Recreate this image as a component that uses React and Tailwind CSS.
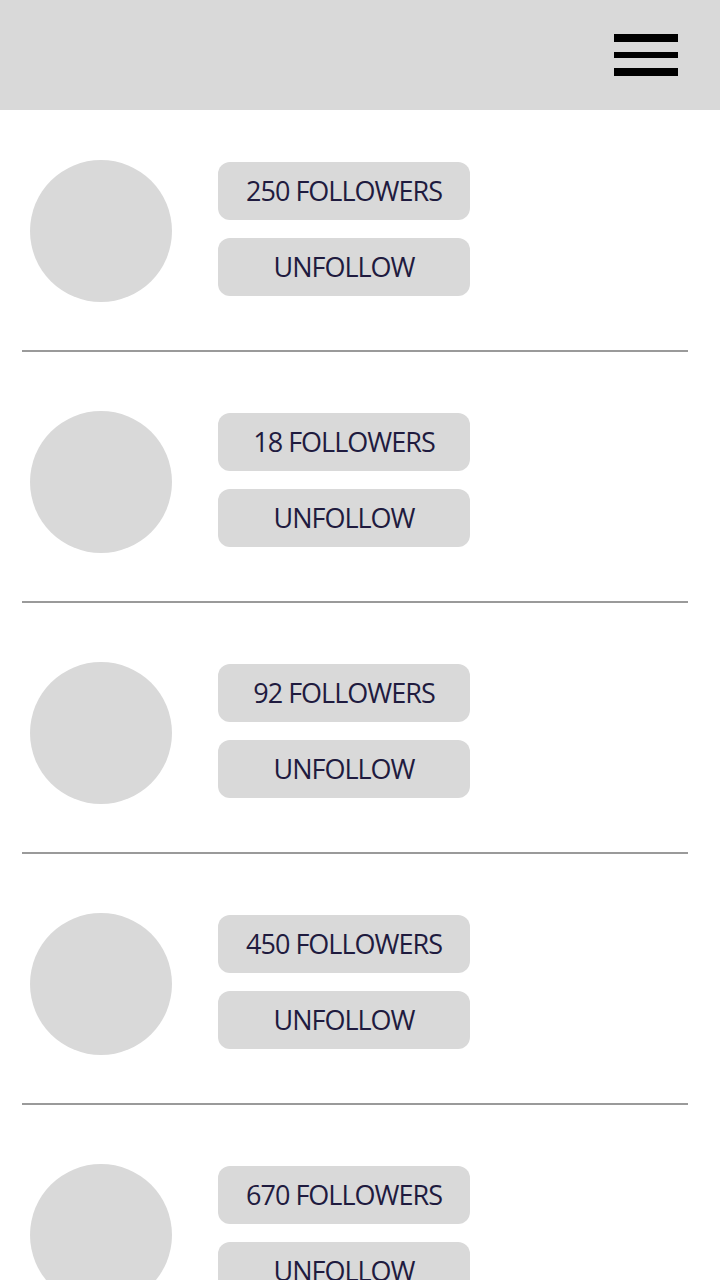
const PEOPLE = [
  { id: 1, followers: 250 },
  { id: 2, followers: 18 },
  { id: 3, followers: 92 },
  { id: 4, followers: 450 },
  { id: 5, followers: 670 },
];

function Pill({ children }) {
  return (
    <button className="flex h-[58px] w-[252px] items-center justify-center rounded-[12px] bg-[#d9d9d9] text-[27px] tracking-[-1px] text-[#1f1b3f]">
      {children}
    </button>
  );
}

export default function App() {
  return (
    <div className="min-h-screen bg-white font-['Open_Sans',sans-serif]">
      <header className="flex h-[110px] items-start justify-end bg-[#d9d9d9] pr-[42px] pt-[34px]">
        {/* hamburger */}
        <div className="flex w-[64px] flex-col">
          <span className="h-[8px] bg-black" />
          <span className="mt-[10px] h-[6px] bg-black" />
          <span className="mt-[10px] h-[8px] bg-black" />
        </div>
      </header>

      <ul className="ml-[22px] mr-[32px]">
        {PEOPLE.map((p, i) => (
          <li
            key={p.id}
            className={
              'flex items-center border-b-2 border-[#9a9a9a] pb-[48px] ' +
              (i === 0 ? 'pt-[50px]' : 'pt-[59px]')
            }
          >
            <div className="ml-[8px] h-[142px] w-[142px] shrink-0 rounded-full bg-[#d9d9d9]" />
            <div className="ml-[46px] flex flex-col gap-[18px] -translate-y-[2px]">
              <Pill>{p.followers} FOLLOWERS</Pill>
              <Pill>UNFOLLOW</Pill>
            </div>
          </li>
        ))}
      </ul>
    </div>
  );
}
